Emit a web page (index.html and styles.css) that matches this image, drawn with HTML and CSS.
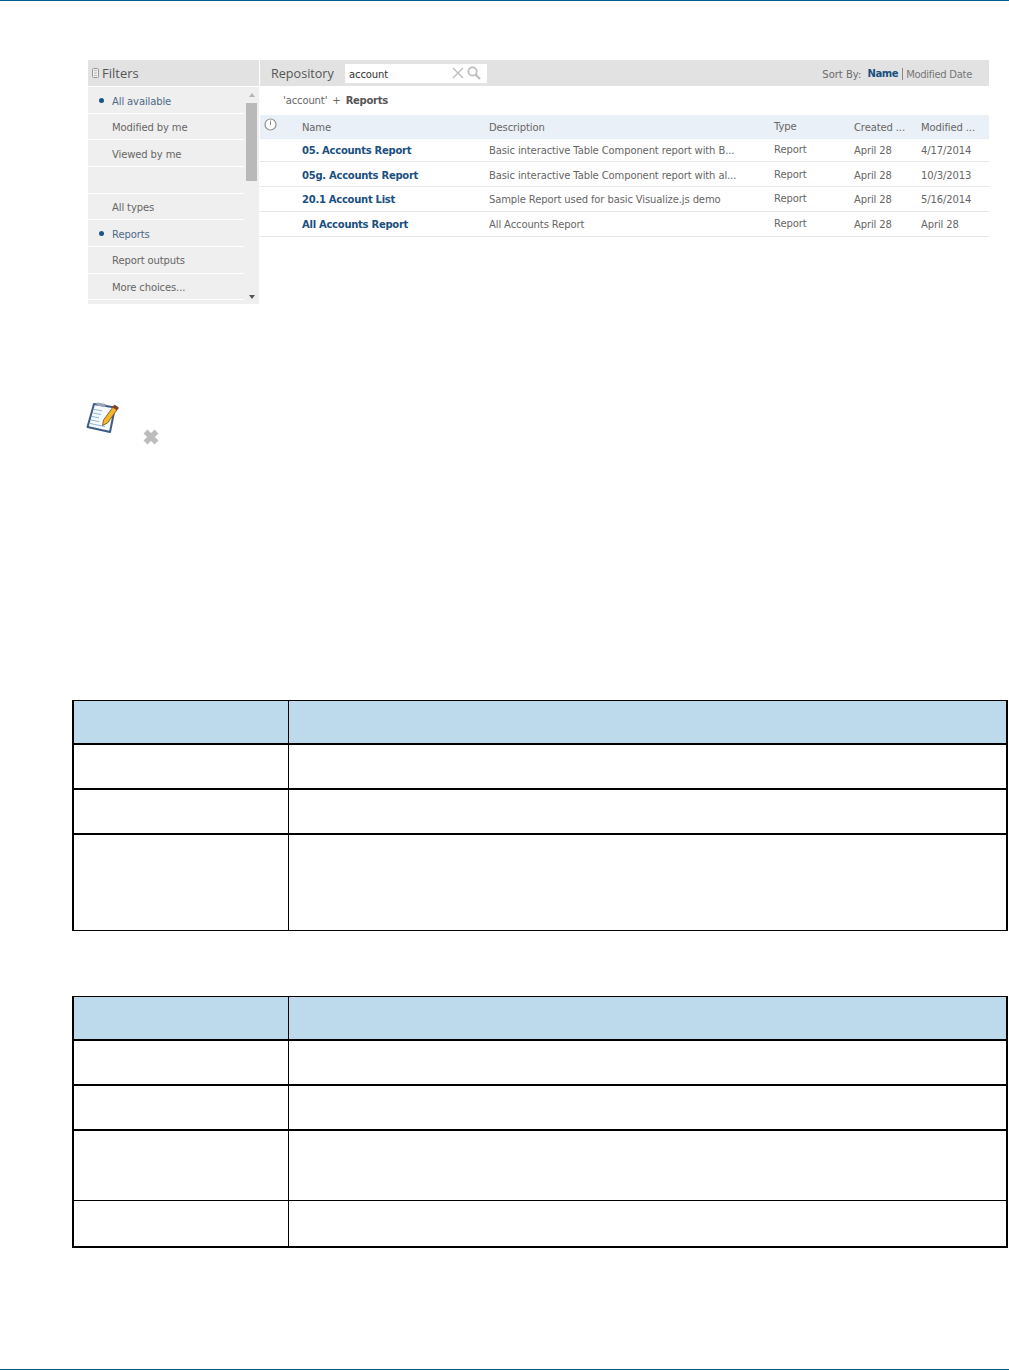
FILE: index.html
```html
<!DOCTYPE html>
<html lang="en">
<head>
<meta charset="utf-8">
<title>Repository search</title>
<link rel="stylesheet" href="styles.css">
</head>
<body>
<div class="rule-top"></div>
<main class="page">
  <section class="shot">
    <aside class="filters">
      <div class="filters-head">
        <svg class="toggle" width="7" height="10" viewBox="0 0 7 10"><rect x="0.5" y="0.5" width="6" height="9" rx="1" fill="#eee" stroke="#999"/><path d="M2 2.500h3M2 5h3M2 7.500h3" stroke="#bbb"/></svg>
        <span>Filters</span>
      </div>
      <div class="filters-body">
        <ul class="filter-list">
          <li class="on">All available</li>
          <li>Modified by me</li>
          <li>Viewed by me</li>
          <li></li>
          <li>All types</li>
          <li class="on">Reports</li>
          <li>Report outputs</li>
          <li>More choices...</li>
          <li></li>
        </ul>
        <div class="scrollbar">
          <span class="arrow-up"></span>
          <span class="thumb"></span>
          <span class="arrow-down"></span>
        </div>
      </div>
    </aside>
    <div class="repo">
      <header class="repo-head">
        <span class="repo-title">Repository</span>
        <div class="search">
          <span class="search-text">account</span>
          <svg class="search-x" width="12" height="12" viewBox="0 0 12 12"><path d="M1 1l10 10M11 1L1 11" stroke="#bdbdbd" stroke-width="1.400" fill="none"/></svg>
          <svg class="search-glass" width="14" height="14" viewBox="0 0 14 14"><circle cx="5.500" cy="5.500" r="4.200" stroke="#bdbdbd" stroke-width="1.800" fill="none"/><path d="M8.500 8.500l4.500 4.500" stroke="#bdbdbd" stroke-width="2.200"/></svg>
        </div>
        <div class="sort">
          <span class="sort-label">Sort By:</span>
          <b class="sort-on">Name</b>
          <span class="sort-alt">Modified Date</span>
        </div>
      </header>
      <div class="crumb">'account' <span class="plus">+</span> <b>Reports</b></div>
      <div class="grid grid-head">
        <span class="clock"><svg width="13" height="13" viewBox="0 0 13 13"><circle cx="6.500" cy="6.500" r="5.500" fill="#fff" stroke="#8f8f8f" stroke-width="1.200"/><path d="M6.500 2.500V7" stroke="#8f8f8f"/></svg></span>
        <span>Name</span><span>Description</span><span class="type">Type</span><span>Created ...</span><span>Modified ...</span>
      </div>
      <div class="grid">
        <span></span><b class="name">05. Accounts Report</b><span>Basic interactive Table Component report with B...</span><span class="type">Report</span><span>April 28</span><span>4/17/2014</span>
      </div>
      <div class="grid">
        <span></span><b class="name">05g. Accounts Report</b><span>Basic interactive Table Component report with al...</span><span class="type">Report</span><span>April 28</span><span>10/3/2013</span>
      </div>
      <div class="grid">
        <span></span><b class="name">20.1 Account List</b><span>Sample Report used for basic Visualize.js demo</span><span class="type">Report</span><span>April 28</span><span>5/16/2014</span>
      </div>
      <div class="grid">
        <span></span><b class="name">All Accounts Report</b><span>All Accounts Report</span><span class="type">Report</span><span>April 28</span><span>April 28</span>
      </div>
    </div>
  </section>

  <section class="note">
    <svg class="note-pad" width="34" height="34" viewBox="0 0 34 34">
      <path d="M8 3L29 6.500 24 31 1.500 26z" fill="#f6f9fd" stroke="#3c5a85" stroke-width="2" stroke-linejoin="round"/>
      <path d="M11 1.500l9 1.500-.6 3-9-1.500z" fill="#98a4b4"/>
      <path d="M8 8.500l8 1.300M7 12l8 1.500M6 15.500l7 1.300M5 19l8 1.600M4 22.500l15 3" stroke="#8fb6d8" stroke-width="1"/>
      <path d="M28.500 4l4 2.800-11 15.200-5 2.500 1-5.500z" fill="#f3b72f" stroke="#6e4a14" stroke-width="0.800" stroke-linejoin="round"/>
      <path d="M28.500 4l4 2.800-1.800 2.500-4-2.800z" fill="#8c3a26"/>
    </svg>
    <svg class="note-x" width="18" height="18" viewBox="0 0 18 18"><path d="M3.500 3.500l11 11M14.500 3.500l-11 11" stroke="#bcbcbc" stroke-width="5.500"/></svg>
  </section>

  <table class="doc doc-one">
    <tr class="r-head"><th class="c1"></th><th></th></tr>
    <tr class="r-45"><td></td><td></td></tr>
    <tr class="r-45"><td></td><td></td></tr>
    <tr class="r-96 thin"><td></td><td></td></tr>
  </table>

  <table class="doc doc-two">
    <tr class="r-head"><th class="c1"></th><th></th></tr>
    <tr class="r-45"><td></td><td></td></tr>
    <tr class="r-45"><td></td><td></td></tr>
    <tr class="r-70 thin"><td></td><td></td></tr>
    <tr class="r-47"><td></td><td></td></tr>
  </table>
</main>
<div class="rule-bottom"></div>
</body>
</html>
```

FILE: styles.css
```css
* { box-sizing: border-box; }
html, body { margin: 0; padding: 0; background: #fff; }
body {
  height: 1370px;
  display: flex;
  flex-direction: column;
  font-family: "DejaVu Sans", sans-serif;
  font-size: 10px;
  letter-spacing: -0.12px;
  color: #666;
  overflow: hidden;
}
b { letter-spacing: -0.27px; }
.rule-top { height: 1px; background: #005b8e; flex: none; }
.rule-bottom { height: 1px; background: #0f5a85; flex: none; margin-top: auto; }
.page { display: flex; flex-direction: column; }

/* embedded screenshot */
.shot { display: flex; width: 901px; height: 244px; margin: 59px 0 0 88px; }
.filters { width: 171px; flex: none; margin-right: 1px; display: flex; flex-direction: column; }
.filters-head {
  height: 26px; background: #e2e2e2; display: flex; align-items: center;
  gap: 3px; padding: 0 0 0 4px;
  font: 13px "Open Sans", sans-serif; letter-spacing: 0; color: #555;
}
.filters-body { display: flex; flex: 1; margin-top: 1px; overflow: hidden; }
.filter-list { list-style: none; margin: 0; padding: 0; width: 156px; flex: none; }
.filter-list li {
  height: 26.67px; background: #efefef; border-bottom: 1px solid #fff;
  padding: 1.500px 0 0 24px; line-height: 26px; position: relative; white-space: nowrap;
}
.filter-list li.on { color: #4d6a87; }
.filter-list li.on::before {
  content: ""; position: absolute; left: 11px; top: 11px; width: 5px; height: 5px;
  border-radius: 50%; background: #1b5688;
}
.scrollbar { flex: 1; background: #efefef; position: relative; display: flex; flex-direction: column; align-items: center; }
.thumb { width: 11px; height: 78px; background: #b9b9b9; margin-top: 6px; }
.arrow-up { margin-top: 6px; border: 3.500px solid transparent; border-top: 0; border-bottom: 4px solid #b5b5b5; }
.arrow-down { margin-top: auto; margin-bottom: 5px; border: 3.500px solid transparent; border-bottom: 0; border-top: 4px solid #555; }

.repo { flex: 1; display: flex; flex-direction: column; }
.repo-head { height: 26px; background: #e2e2e2; display: flex; align-items: center; padding: 0 17px 0 11px; }
.repo-title { font: 12.600px "Open Sans", sans-serif; letter-spacing: 0; color: #555; width: 74px; flex: none; }
.search { width: 142px; height: 19px; background: #fff; display: flex; align-items: center; padding: 0 6px 0 4px; color: #333; }
.search-text { flex: 1; padding-top: 2px; }
.search-x { margin-right: 3px; }
.sort { margin-left: auto; display: flex; align-items: center; padding-top: 2px; }
.sort-label { margin-right: 6px; padding-top: 1px; color: #6b6b6b; letter-spacing: 0; }
.sort-on { color: #1a4f80; padding-right: 4px; border-right: 1px solid #888; line-height: 12px; letter-spacing: -0.4px; }
.sort-alt { padding-left: 3px; color: #777; letter-spacing: -0.3px; }
.crumb { height: 29px; padding-left: 23px; line-height: 29px; white-space: nowrap; }
.crumb b { color: #555; }
.plus { margin: 0 2px; }
.grid {
  display: grid;
  grid-template-columns: 42px 187px 285px 80px 67px 1fr;
  height: 24.800px; padding-top: 2px; align-items: center; white-space: nowrap;
  border-bottom: 1px solid #e6e6e6;
}
.grid-head { height: 24px; background: #eaf0f7; border-bottom: 1px solid #e6edf5; color: #666; }
.grid-head + .grid { height: 23.200px; padding-top: 0; }
.clock { padding-left: 4px; display: flex; align-self: start; padding-top: 1px; }
.type { margin-top: -2px; }
.name { color: #1a4f80; }

/* note */
.note { display: flex; align-items: flex-end; gap: 22px; margin: 99px 0 0 86px; height: 43px; }
.note-pad { margin-bottom: 11px; }

/* doc tables */
.doc { border-collapse: separate; border-spacing: 0; table-layout: fixed; width: 936px; margin-left: 72px; }
.doc th, .doc td { padding: 0; border-bottom: 2px solid #000; border-right: 1px solid #000; }
.doc th { background: #bcdaec; border-top: 1px solid #000; }
.doc tr > :first-child { border-left: 2px solid #000; }
.doc tr > :last-child { border-right-width: 2px; }
.doc .c1 { width: 217px; }
.doc .thin td { border-bottom-width: 1px; }
.doc-one { margin-top: 254px; }
.doc-two { margin-top: 65px; }
.r-head { height: 45px; }
.r-45 { height: 45px; }
.r-47 { height: 47px; }
.r-70 { height: 70px; }
.r-96 { height: 96px; }
```
